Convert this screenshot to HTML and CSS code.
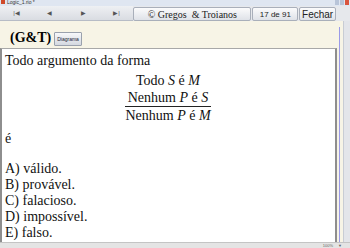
FILE: index.html
```html
<!DOCTYPE html>
<html lang="pt">
<head>
	<meta charset="UTF-8">
	<title>Logic_1.rio</title>
	<link rel="stylesheet" href="styles.css">
</head>
<body>
	<div class="app">
		<div class="titlebar">
			<span class="appicon"></span>
			<span class="title">Logic_1.rio *</span>
			<span class="winbtns"><i class="wb"></i><i class="wb"></i><i class="wb close"></i></span>
		</div>
		<div class="toolbar">
			<div class="nav">
				<span class="navbtn">|&#9664;</span>
				<span class="navbtn">&#9664;</span>
				<span class="navbtn">&#9654;</span>
				<span class="navbtn">&#9654;|</span>
			</div>
			<span class="tbtn brand">&copy; Gregos &nbsp;&amp; Troianos</span>
			<span class="tbtn count">17 de 91</span>
			<span class="tbtn close-btn">Fechar</span>
		</div>
		<div class="main">
			<div class="page">
				<div class="header">
					<span class="tag">(G&amp;T)</span>
					<span class="diag">Diagrama</span>
				</div>
				<div class="content">
					<p class="intro">Todo argumento da forma</p>
					<div class="syllogism">
						<div class="line">Todo <i>S</i> é <i>M</i></div>
						<div class="line rule">Nenhum <i>P</i> é <i>S</i></div>
						<div class="line">Nenhum <i>P</i> é <i>M</i></div>
					</div>
					<p class="e">é</p>
					<ul class="options">
						<li>A) válido.</li>
						<li>B) provável.</li>
						<li>C) falacioso.</li>
						<li>D) impossível.</li>
						<li>E) falso.</li>
					</ul>
				</div>
			</div>
			<div class="side">
				<div class="rail"></div>
				<div class="scroll"></div>
			</div>
		</div>
		<div class="status">
			<span class="zoom">100%</span>
			<span class="arrow">&#9660;</span>
		</div>
	</div>
</body>
</html>
```
FILE: styles.css
```css
*{
	margin: 0;
	padding: 0;
	box-sizing: border-box;
}
body{
	font-family: "Liberation Serif", serif;
	background: #ece9e2;
}
.app{
	width: 350px;
	height: 248px;
	display: flex;
	flex-direction: column;
	overflow: hidden;
}
.titlebar{
	height: 6px;
	flex-shrink: 0;
	display: flex;
	align-items: flex-start;
	background: #dfe6f1;
	font-family: "Liberation Sans", sans-serif;
	font-size: 5px;
	line-height: 5px;
	color: #333;
}
.appicon{
	width: 4px;
	height: 4px;
	margin: 0 2px 0 1px;
	background: #d04a2a;
}
.title{
	flex: 1;
}
.winbtns{
	display: flex;
	gap: 1px;
	padding-right: 1px;
}
.wb{
	width: 4px;
	height: 5px;
	background: #b8c4d8;
}
.wb.close{
	background: #d9553f;
}
.toolbar{
	height: 15px;
	flex-shrink: 0;
	display: flex;
	align-items: stretch;
	background: #e6e8ec;
	padding-right: 14px;
	font-family: "Liberation Sans", sans-serif;
}
.nav{
	width: 134px;
	display: flex;
	background: linear-gradient(#eef0f3, #d9dce2);
	border-bottom: 1px solid #b7bcc6;
}
.navbtn{
	flex: 1;
	text-align: center;
	font-size: 6px;
	line-height: 14px;
	color: #555;
}
.tbtn{
	display: flex;
	align-items: center;
	justify-content: center;
	margin-top: 1px;
	background: linear-gradient(#fbfbfc, #dfe2e8);
	border: 1px solid #a9afba;
	border-radius: 2px;
}
.brand{
	width: 119px;
	font-family: "Liberation Serif", serif;
	font-size: 10px;
	color: #222;
}
.count{
	width: 46px;
	margin-left: 1px;
	font-size: 8px;
	color: #222;
}
.close-btn{
	width: 37px;
	margin-left: 1px;
	font-size: 10px;
	color: #222;
}
.main{
	flex: 1;
	display: flex;
	min-height: 0;
}
.page{
	flex: 1;
	display: flex;
	flex-direction: column;
	min-width: 0;
}
.header{
	height: 27px;
	flex-shrink: 0;
	display: flex;
	align-items: center;
	gap: 3px;
	padding: 6px 0 0 10px;
	background: #f7f4e6;
}
.tag{
	font-size: 14px;
	font-weight: bold;
}
.diag{
	font-family: "Liberation Sans", sans-serif;
	font-size: 5px;
	padding: 3px 2px;
	margin-top: 2px;
	border: 1px solid #9aa1ad;
	border-radius: 1px;
	background: linear-gradient(#f7f8fa, #d4d8e0);
	color: #223;
}
.content{
	flex: 1;
	min-height: 0;
	overflow: hidden;
	background: #fff;
	border-top: 1px solid #a8a8a8;
	border-left: 2px solid #8e8e8e;
	border-right: 2px solid #8e8e8e;
	padding: 4px 4px 0 3px;
	font-size: 14px;
	line-height: 16px;
	color: #111;
}
.syllogism{
	display: flex;
	flex-direction: column;
	width: fit-content;
	margin: 3px auto 0;
	white-space: nowrap;
	text-align: center;
}
.syllogism .line{
	line-height: 17px;
}
.syllogism .rule{
	border-bottom: 1px solid #222;
}
.e{
	margin-top: 7px;
}
.options{
	list-style: none;
	margin-top: 14px;
}
.side{
	width: 13px;
	flex-shrink: 0;
	display: flex;
	background: #f7f4e6;
}
.rail{
	width: 4px;
	border-left: 1px solid #9a9ae8;
	margin: 6px 0 0 2px;
}
.scroll{
	flex: 1;
	background: #e3e5ea;
	border-left: 1px solid #c8ccd4;
}
.status{
	height: 6px;
	flex-shrink: 0;
	display: flex;
	justify-content: flex-end;
	align-items: center;
	gap: 5px;
	padding-right: 8px;
	background: #e4e4e4;
	border-top: 1px solid #c4c4c4;
	font-family: "Liberation Sans", sans-serif;
	font-size: 4px;
	color: #666;
}
```
